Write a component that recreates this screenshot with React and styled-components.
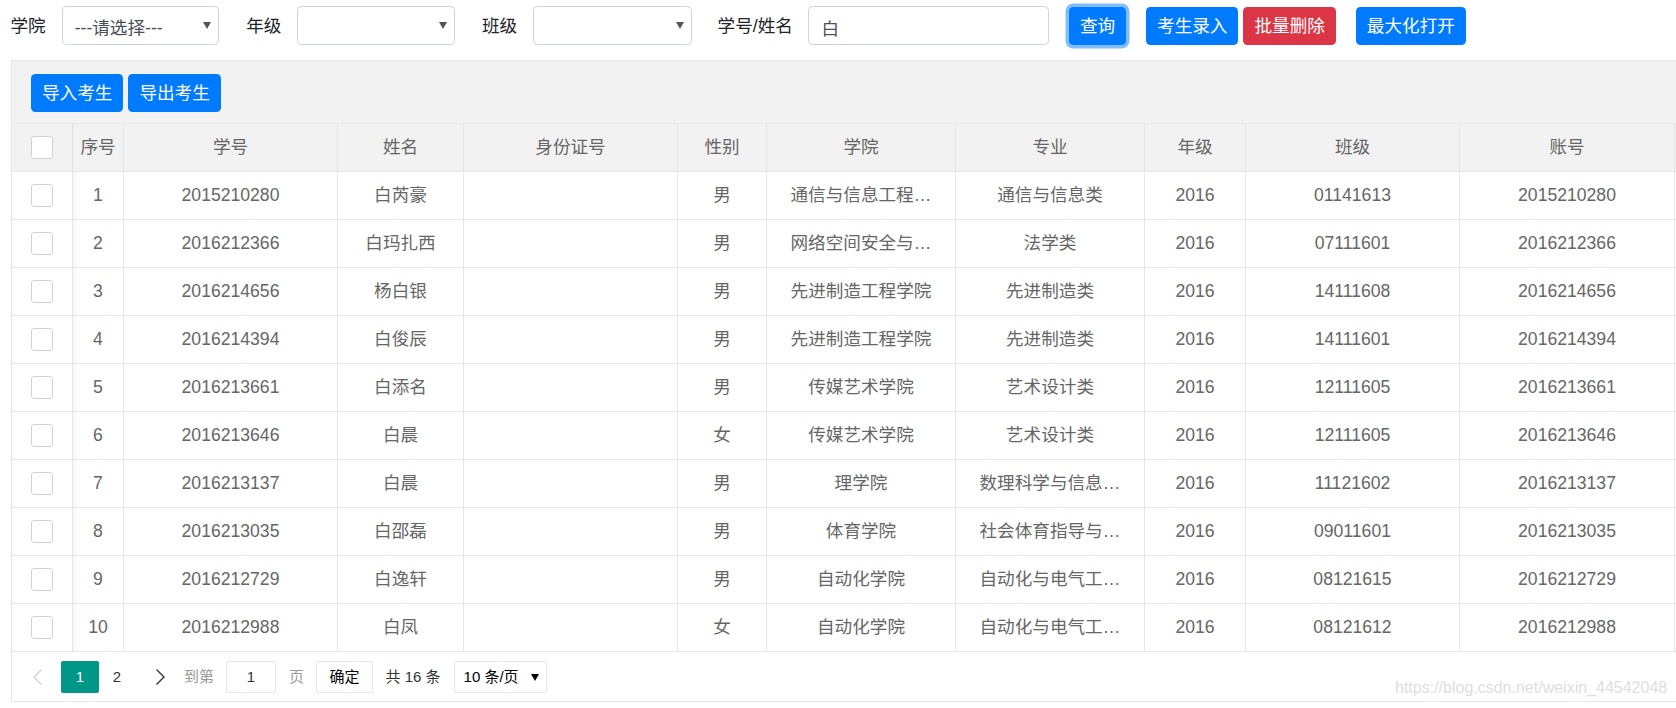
import React from "react";
import styled, { createGlobalStyle } from "styled-components";

const Global = createGlobalStyle`
  html, body { margin: 0; padding: 0; background: #fff; }
  body {
    width: 1676px; height: 708px; overflow: hidden;
    font-family: "Liberation Sans", "Noto Sans CJK SC", sans-serif;
    font-size: 17.6px; line-height: 24px; color: #212529;
  }
  * { box-sizing: border-box; }
`;

const Page = styled.div`
  position: relative;
  width: 1676px;
  height: 708px;
  overflow: hidden;
`;

const TopBar = styled.div`
  display: flex;
  align-items: center;
  height: 39px;
  margin-top: 6px;
  padding-left: 10.5px;
`;

const Field = styled.div`
  display: flex;
  align-items: center;
  gap: ${(p) => p.$gap || 16}px;
  margin-right: ${(p) => p.$after || 27}px;
`;

const Label = styled.label`
  font-size: 17.6px;
  color: #212529;
  white-space: nowrap;
`;

const SelectWrap = styled.div`
  position: relative;
  width: ${(p) => p.$width}px;
  height: 39px;
  &::after {
    content: "";
    position: absolute;
    right: ${(p) => p.$arrowRight || 8}px;
    top: 16px;
    border-left: 4px solid transparent;
    border-right: 4px solid transparent;
    border-top: 7px solid ${(p) => p.$arrowColor || "#555"};
    pointer-events: none;
  }
`;

const Select = styled.select`
  appearance: none;
  width: 100%;
  height: 100%;
  padding: 5px 24px 0 12px;
  border: 1px solid #ced4da;
  border-radius: 4.4px;
  background: #fff;
  color: #495057;
  font: inherit;
  font-size: 17.6px;
  outline: none;
`;

const TextInput = styled.input`
  width: 241px;
  height: 39px;
  padding: 4px 12px 0;
  border: 1px solid #ced4da;
  border-radius: 4.4px;
  color: #495057;
  font: inherit;
  font-size: 17.6px;
  outline: none;
`;

const Button = styled.button`
  height: 38px;
  padding: 0 11px;
  border: 0;
  border-radius: 4.4px;
  background: ${(p) => (p.$danger ? "#dc3545" : "#007bff")};
  color: #fff;
  font: inherit;
  font-size: 17.6px;
  white-space: nowrap;
  margin-left: ${(p) => p.$left || 0}px;
  box-shadow: ${(p) => (p.$focused ? "0 0 0 3.5px rgba(0,123,255,.5)" : "none")};
`;

const Panel = styled.div`
  margin: 15px 0 0 11px;
  height: 642px;
  width: 1680px;
  border: 1px solid #e6e6e6;
  overflow: hidden;
`;

const Toolbar = styled.div`
  display: flex;
  gap: 5px;
  height: 63px;
  padding: 13px 0 0 19px;
  background: #f2f2f2;
  border-bottom: 1px solid #e6e6e6;
`;

const Table = styled.table`
  table-layout: fixed;
  width: 1683px;
  border-collapse: separate;
  border-spacing: 0;
`;

const Th = styled.th`
  height: 48px;
  padding: 0 4px 2px;
  background: #f2f2f2;
  border-right: 1px solid #e6e6e6;
  border-bottom: 1px solid #e6e6e6;
  color: #666;
  font-weight: 400;
  font-size: 17.6px;
  text-align: center;
  position: relative;
  ${(p) => p.$fixed && "&::after { content: ''; position: absolute; top: 0; bottom: -1px; left: 100%; width: 6px; background: linear-gradient(90deg, rgba(0,0,0,.035), transparent); }"}
`;

const Td = styled.td`
  height: 48px;
  padding: ${(p) => (p.$tight ? "0 4px 2px" : "0 23.5px 2px")};
  border-right: 1px solid #e6e6e6;
  border-bottom: 1px solid #e6e6e6;
  color: #666;
  font-size: 17.6px;
  text-align: center;
  white-space: nowrap;
  overflow: hidden;
  text-overflow: ellipsis;
  position: relative;
`;

const FixedShade = styled.span`
  position: absolute;
  top: 0;
  bottom: 0;
  left: 0;
  width: 6px;
  background: linear-gradient(90deg, rgba(0,0,0,.035), transparent);
`;

const Check = styled.span`
  display: block;
  width: 22px;
  height: 23px;
  margin: 2px auto 0;
  background: #fff;
  border: 1px solid #d2d2d2;
  border-radius: 3px;
`;

const Footer = styled.div`
  display: flex;
  align-items: center;
  height: 49px;
  padding: 0 0 0 6px;
  font-size: 15px;
  color: #333;
`;

const Arrow = styled.span`
  display: flex;
  align-items: center;
  justify-content: center;
  width: 38px;
  height: 32px;
  margin: 0 ${(p) => p.$right || 0}px 0 ${(p) => p.$left || 0}px;
`;

const PageNum = styled.span`
  display: flex;
  align-items: center;
  justify-content: center;
  width: ${(p) => (p.$active ? 38 : 36)}px;
  height: 32px;
  border-radius: 2px;
  background: ${(p) => (p.$active ? "#009688" : "transparent")};
  color: ${(p) => (p.$active ? "#fff" : "#333")};
`;

const Note = styled.span`
  margin-left: ${(p) => p.$left}px;
  color: ${(p) => p.$color || "#999"};
  white-space: nowrap;
`;

const PageInput = styled.input`
  width: 50px;
  height: 32px;
  margin-left: 12px;
  border: 1px solid #e6e6e6;
  border-radius: 2px;
  color: #333;
  font: inherit;
  text-align: center;
  outline: none;
`;

const Confirm = styled.button`
  width: 57px;
  height: 32px;
  margin-left: 12px;
  padding: 0;
  background: #fff;
  border: 1px solid #e6e6e6;
  border-radius: 2px;
  color: #000;
  font: inherit;
`;

const SizeWrap = styled(SelectWrap)`
  height: 32px;
  margin-left: 13px;
  &::after { top: 13px; right: 8px; border-top-width: 7px; }
`;

const SizeSelect = styled(Select)`
  padding: 0 20px 0 9px;
  border-color: #e6e6e6;
  border-radius: 2px;
  color: #000;
  font-size: 15px;
`;

const Watermark = styled.span`
  position: absolute;
  left: 1395px;
  top: 678px;
  font-size: 16px;
  line-height: 20px;
  color: #dedede;
  white-space: nowrap;
`;

const widths = [61, 51, 214, 126, 214, 89, 189, 189, 101, 214, 215, 20];
const headers = ["序号", "学号", "姓名", "身份证号", "性别", "学院", "专业", "年级", "班级", "账号"];
const rows = [
  ["2015210280", "白芮豪", "男", "通信与信息工程学院", "通信与信息类", "01141613"],
  ["2016212366", "白玛扎西", "男", "网络空间安全与信息法学院", "法学类", "07111601"],
  ["2016214656", "杨白银", "男", "先进制造工程学院", "先进制造类", "14111608"],
  ["2016214394", "白俊辰", "男", "先进制造工程学院", "先进制造类", "14111601"],
  ["2016213661", "白添名", "男", "传媒艺术学院", "艺术设计类", "12111605"],
  ["2016213646", "白晨", "女", "传媒艺术学院", "艺术设计类", "12111605"],
  ["2016213137", "白晨", "男", "理学院", "数理科学与信息科学类", "11121602"],
  ["2016213035", "白邵磊", "男", "体育学院", "社会体育指导与管理", "09011601"],
  ["2016212729", "白逸轩", "男", "自动化学院", "自动化与电气工程类", "08121615"],
  ["2016212988", "白凤", "女", "自动化学院", "自动化与电气工程类", "08121612"],
];

const Chevron = ({ dir, color }) => (
  <svg width="11" height="18" viewBox="0 0 11 18" fill="none">
    <path
      d={dir === "left" ? "M9.5 1.5 2 9l7.5 7.5" : "M1.5 1.5 9 9l-7.5 7.5"}
      stroke={color}
      strokeWidth="1.4"
    />
  </svg>
);

export default function App() {
  return (
    <Page>
      <Global />
      <TopBar>
        <Field>
          <Label>学院</Label>
          <SelectWrap $width={157.5}>
            <Select defaultValue="a"><option value="a">---请选择---</option></Select>
          </SelectWrap>
        </Field>
        <Field $after={26.5}>
          <Label>年级</Label>
          <SelectWrap $width={158}><Select><option></option></Select></SelectWrap>
        </Field>
        <Field $after={26}>
          <Label>班级</Label>
          <SelectWrap $width={158.5}><Select><option></option></Select></SelectWrap>
        </Field>
        <Field $gap={15.5} $after={19.5}>
          <Label>学号/姓名</Label>
          <TextInput defaultValue="白" />
        </Field>
        <Button $focused>查询</Button>
        <Button $left={20}>考生录入</Button>
        <Button $left={5} $danger>批量删除</Button>
        <Button $left={20}>最大化打开</Button>
      </TopBar>
      <Panel>
        <Toolbar>
          <Button>导入考生</Button>
          <Button>导出考生</Button>
        </Toolbar>
        <Table>
          <colgroup>
            {widths.map((w, i) => <col key={i} style={{ width: w }} />)}
          </colgroup>
          <thead>
            <tr>
              <Th $fixed><Check /></Th>
              {headers.map((h) => <Th key={h}>{h}</Th>)}
              <Th />
            </tr>
          </thead>
          <tbody>
            {rows.map((r, i) => (
              <tr key={i}>
                <Td $tight><Check /></Td>
                <Td $tight><FixedShade />{i + 1}</Td>
                <Td>{r[0]}</Td>
                <Td>{r[1]}</Td>
                <Td></Td>
                <Td>{r[2]}</Td>
                <Td>{r[3]}</Td>
                <Td>{r[4]}</Td>
                <Td>2016</Td>
                <Td>{r[5]}</Td>
                <Td>{r[0]}</Td>
                <Td />
              </tr>
            ))}
          </tbody>
        </Table>
        <Footer>
          <Arrow $right={5}><Chevron dir="left" color="#d2d2d2" /></Arrow>
          <PageNum $active>1</PageNum>
          <PageNum>2</PageNum>
          <Arrow $left={6}><Chevron dir="right" color="#333" /></Arrow>
          <Note $left={5}>到第</Note>
          <PageInput defaultValue="1" />
          <Note $left={13}>页</Note>
          <Confirm>确定</Confirm>
          <Note $left={12.5} $color="#333">共 16 条</Note>
          <SizeWrap $width={93} $arrowColor="#000">
            <SizeSelect><option>10 条/页</option></SizeSelect>
          </SizeWrap>
        </Footer>
      </Panel>
      <Watermark>https://blog.csdn.net/weixin_44542048</Watermark>
    </Page>
  );
}
